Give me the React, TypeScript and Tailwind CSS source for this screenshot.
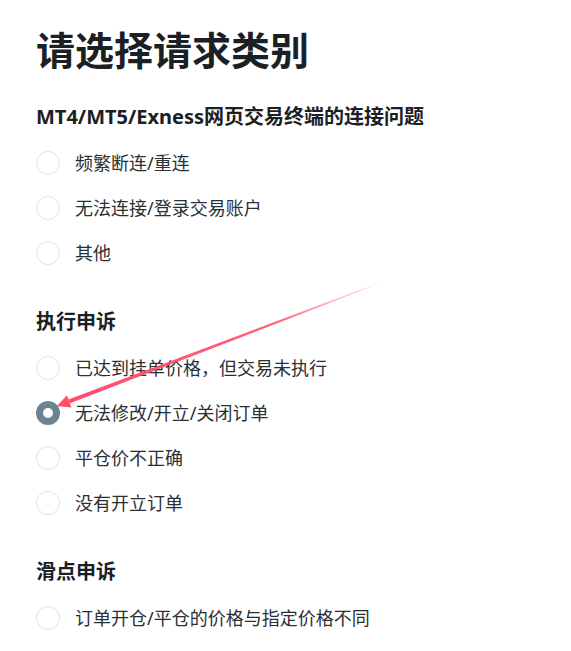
import React from "react";

const font = { fontFamily: '"Noto Sans", "Noto Sans CJK SC", sans-serif' };

type Section = { title: string; options: string[] };

const sections: Section[] = [
  {
    title: "MT4/MT5/Exness网页交易终端的连接问题",
    options: ["频繁断连/重连", "无法连接/登录交易账户", "其他"],
  },
  {
    title: "执行申诉",
    options: ["已达到挂单价格，但交易未执行", "无法修改/开立/关闭订单", "平仓价不正确", "没有开立订单"],
  },
  {
    title: "滑点申诉",
    options: ["订单开仓/平仓的价格与指定价格不同"],
  },
];

function Radio({ checked }: { checked: boolean }) {
  if (checked) {
    return (
      <span className="flex h-6 w-6 shrink-0 items-center justify-center rounded-full bg-[#6b8393]">
        <span className="h-[10px] w-[10px] rounded-full bg-white" />
      </span>
    );
  }
  return <span className="h-6 w-6 shrink-0 rounded-full border-[1.5px] border-[#e3e3e3] bg-white" />;
}

export default function App() {
  return (
    <div className="relative h-[651px] w-[571px] overflow-hidden bg-white pl-9 pt-[26px] text-[#1d2227]" style={font}>
      <h1 className="mb-[29px] h-12 text-[39px] font-bold leading-[48px] text-[#1b2025]">请选择请求类别</h1>
      <div className="flex flex-col gap-[33px]">
        {sections.map((s) => (
          <div key={s.title} className="flex flex-col">
            <h2 className="mb-[9px] h-7 text-[20px] font-bold leading-7 text-[#1b2025]">{s.title}</h2>
            {s.options.map((o) => (
              <div key={o} className="flex h-[45px] items-center gap-[15px]">
                <Radio checked={o === "无法修改/开立/关闭订单"} />
                <span className="text-[18px] leading-6 text-[#2a2f34]">{o}</span>
              </div>
            ))}
          </div>
        ))}
      </div>
      <svg className="pointer-events-none absolute left-0 top-0" width="571" height="651" viewBox="0 0 571 651">
        <defs>
          <linearGradient id="ag" gradientUnits="userSpaceOnUse" x1="69" y1="401" x2="385" y2="281">
            <stop offset="0" stopColor="#ff4d6b" stopOpacity="1" />
            <stop offset="0.65" stopColor="#ff4d6b" stopOpacity="0.9" />
            <stop offset="1" stopColor="#ff4d6b" stopOpacity="0" />
          </linearGradient>
        </defs>
        <polygon points="385.3,281.6 384.7,280.4 68.4,399.6 70,403.3" fill="url(#ag)" />
        <polygon points="57,406 71.5,407.6 67,395.2" fill="#ff4d6b" />
      </svg>
    </div>
  );
}
